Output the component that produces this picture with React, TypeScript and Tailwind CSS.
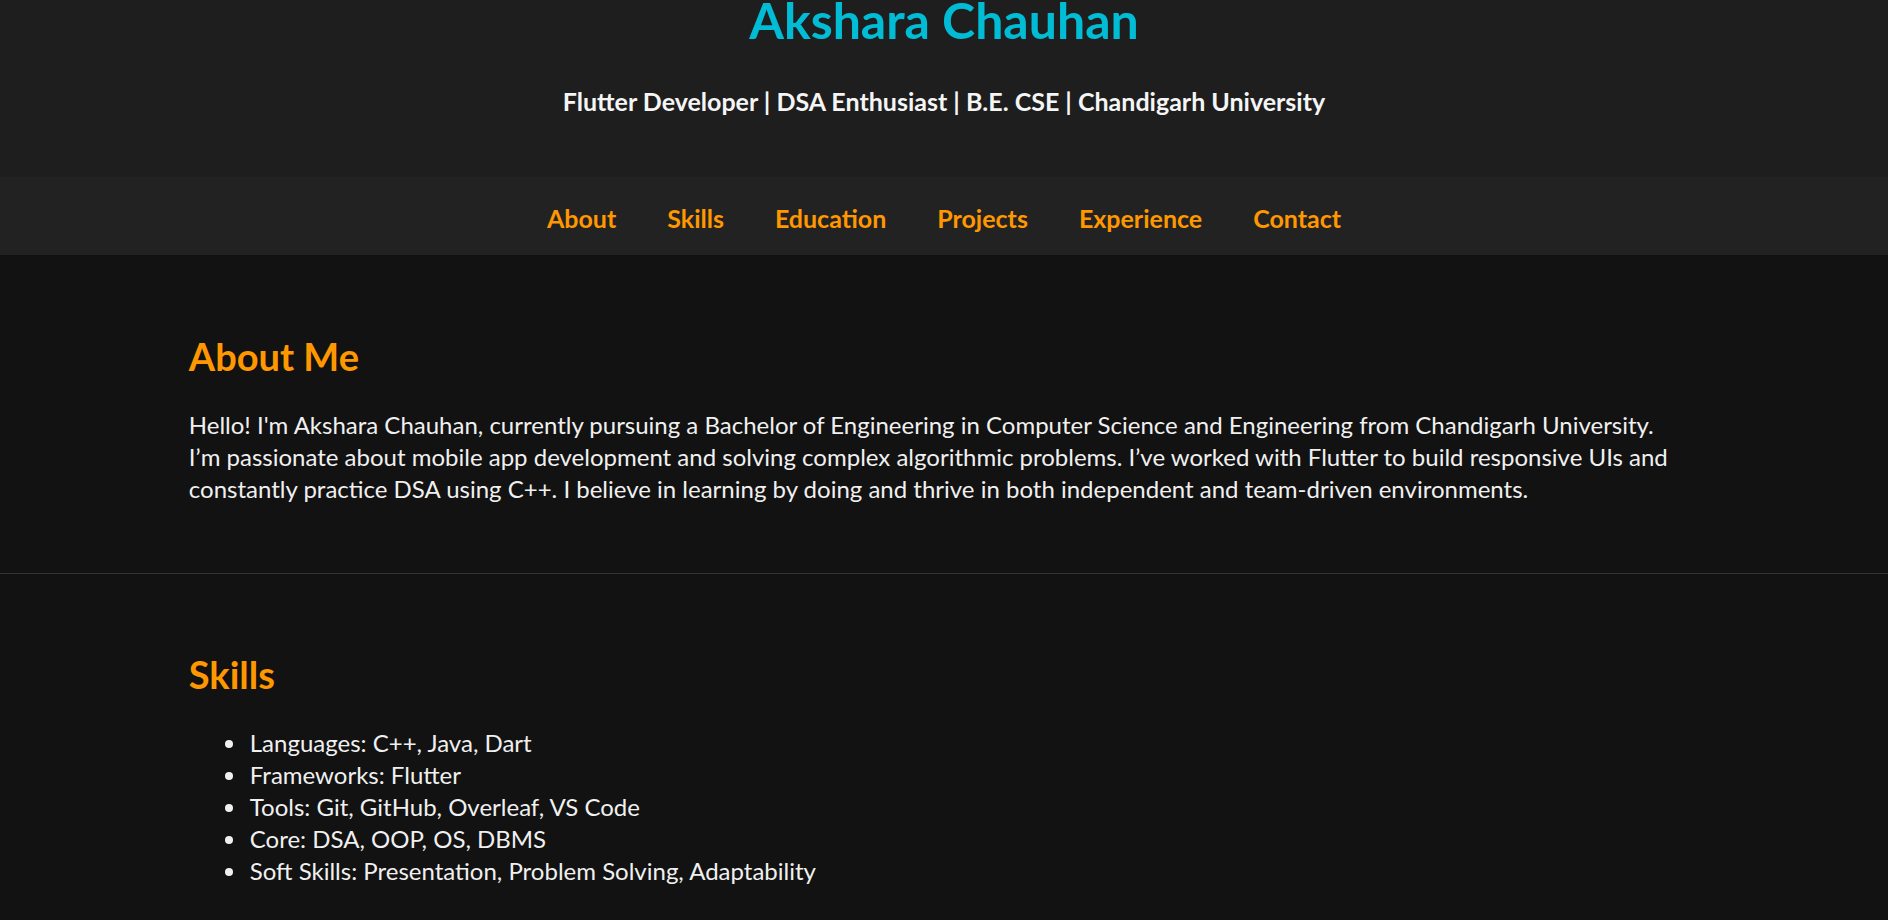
import React from 'react';

const navLinks = ['About', 'Skills', 'Education', 'Projects', 'Experience', 'Contact'];

const skills = [
  'Languages: C++, Java, Dart',
  'Frameworks: Flutter',
  'Tools: Git, GitHub, Overleaf, VS Code',
  'Core: DSA, OOP, OS, DBMS',
  'Soft Skills: Presentation, Problem Solving, Adaptability',
];

const Section: React.FC<{ title: string; top: string; bottom: string; children: React.ReactNode }> = ({
  title,
  top,
  bottom,
  children,
}) => (
  <section className={`px-[10%] border-b border-[#333333] ${top} ${bottom}`}>
    <h2 className="text-[38px] leading-[48px] font-bold text-[#ff9800]">{title}</h2>
    {children}
  </section>
);

export default function App() {
  return (
    <div className="min-h-screen bg-[#121212] text-[#f0f0f0] font-['Lato',sans-serif]">
      <header className="bg-[#1e1e1e] text-center pb-[60px]">
        <h1 className="text-[50px] leading-[40px] font-bold text-[#00bcd4]">Akshara Chauhan</h1>
        <p className="mt-[45px] text-[25px] leading-[32px] font-bold text-[#f5f5f5]">
          Flutter Developer | DSA Enthusiast | B.E. CSE | Chandigarh University
        </p>
      </header>

      <nav className="bg-[#222222] h-[78px] pt-[25px] flex justify-center gap-[51px]">
        {navLinks.map(link => (
          <a key={link} href={`#${link.toLowerCase()}`} className="text-[25px] leading-[32px] font-bold text-[#ff9800]">
            {link}
          </a>
        ))}
      </nav>

      <Section title="About Me" top="pt-[77px]" bottom="pb-[68px]">
        <p className="mt-[29px] text-[24px] leading-[32px]">
          Hello! I'm Akshara Chauhan, currently pursuing a Bachelor of Engineering in Computer Science and Engineering
          from Chandigarh University.
          <br />
          I’m passionate about mobile app development and solving complex algorithmic problems. I’ve worked with Flutter
          to build responsive UIs and constantly practice DSA using C++. I believe in learning by doing and thrive in both
          independent and team-driven environments.
        </p>
      </Section>

      <Section title="Skills" top="pt-[76px]" bottom="pb-[60px]">
        <ul className="mt-[29px] pl-[36px]">
          {skills.map(skill => (
            <li key={skill} className="flex text-[24px] leading-[32px]">
              <span className="w-2 h-2 mt-[13px] mr-[17px] rounded-full bg-[#f0f0f0] shrink-0" />
              <span>{skill}</span>
            </li>
          ))}
        </ul>
      </Section>
    </div>
  );
}
